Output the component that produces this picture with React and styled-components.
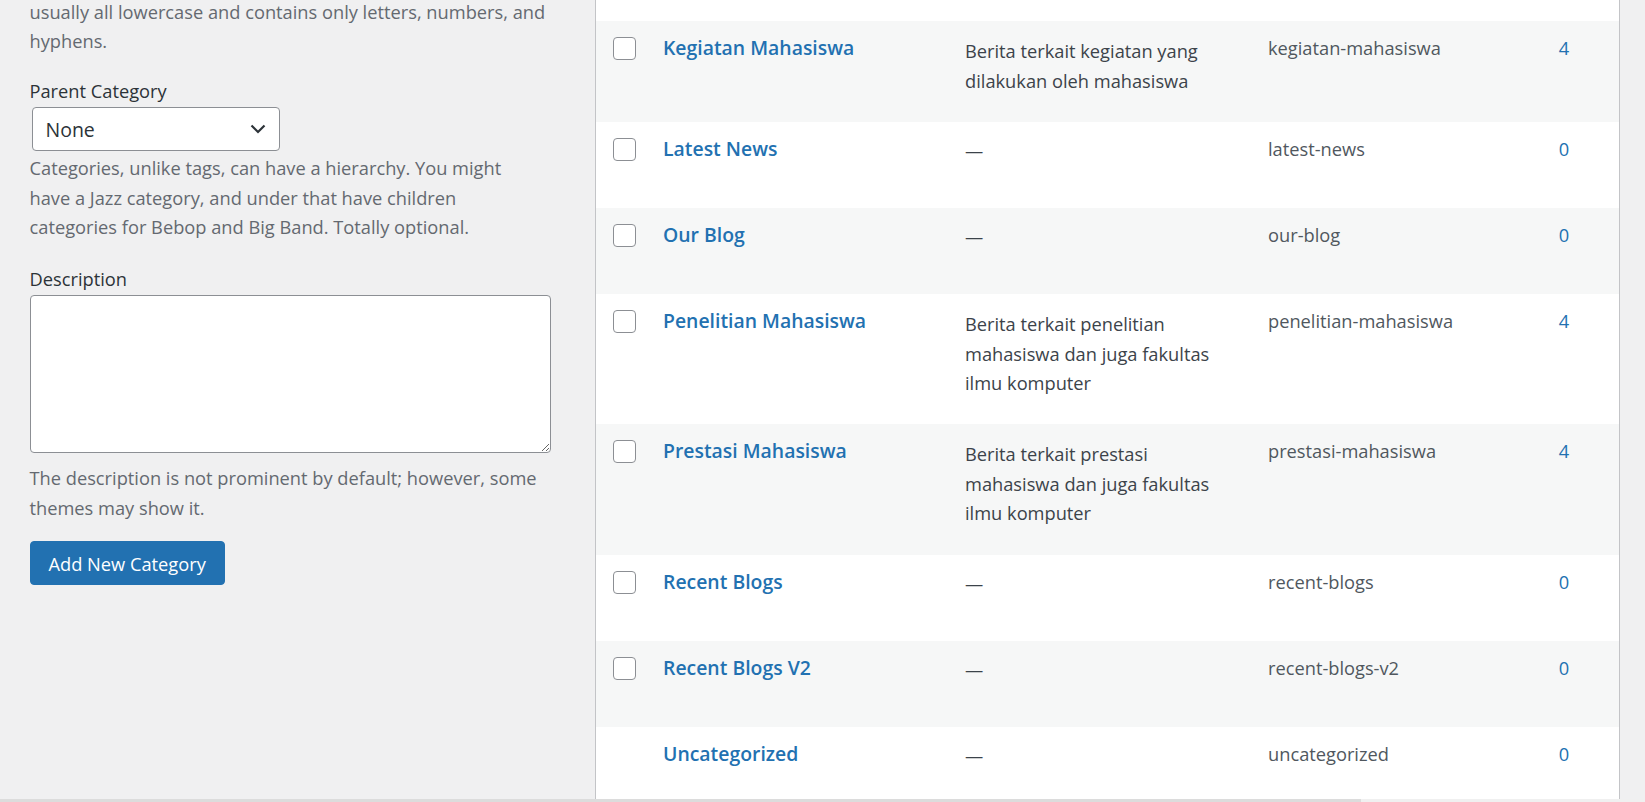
import React from 'react';
import styled, { createGlobalStyle } from 'styled-components';

const GlobalStyle = createGlobalStyle`
  html, body {
    margin: 0;
    padding: 0;
    height: 802px;
    overflow: hidden;
    background: #f0f0f1;
  }
  body {
    font-family: "Segoe UI", "Open Sans", "Noto Sans", sans-serif;
    font-size: 18.25px;
    color: #3c434a;
  }
  * {
    box-sizing: border-box;
  }
`;

const Screen = styled.div`
  display: grid;
  grid-template-rows: 799px 3px;
  height: 802px;
`;

const Main = styled.div`
  display: grid;
  grid-template-columns: 595px 1025px 1fr;
  overflow: hidden;
`;

const FormColumn = styled.div`
  display: flex;
  flex-direction: column;
  align-items: flex-start;
  padding-left: 29.5px;
`;

const Note = styled.p`
  margin: ${props => props.$top}px 0 0;
  line-height: 29.5px;
  color: #646970;
  white-space: nowrap;
`;

const FieldLabel = styled.label`
  display: block;
  margin-top: ${props => props.$top}px;
  line-height: 29.5px;
  color: #2c3338;
`;

const SelectBox = styled.div`
  display: flex;
  align-items: center;
  justify-content: space-between;
  width: 248px;
  height: 44px;
  margin: 1.5px 0 0 2px;
  padding: 0 13px 0 13px;
  background: #fff;
  border: 1px solid #8c8f94;
  border-radius: 4px;
  font-size: 19.5px;
  color: #2c3338;
`;

const TextArea = styled.textarea`
  display: block;
  width: 521px;
  height: 158px;
  margin-top: 1.5px;
  background: #fff;
  border: 1px solid #8c8f94;
  border-radius: 4px;
  font-family: inherit;
  font-size: 18.25px;
  resize: vertical;
`;

const PrimaryButton = styled.button`
  height: 44px;
  margin-top: 19px;
  padding: 0 18px;
  background: #2271b1;
  border: 1px solid #2271b1;
  border-radius: 4px;
  color: #fff;
  font-family: inherit;
  font-size: 18.25px;
  cursor: pointer;
`;

const TableWrap = styled.div`
  background: #fff;
  border-left: 1px solid #c3c4c7;
  border-right: 1px solid #c3c4c7;
`;

const RowTail = styled.div`
  height: 21px;
`;

const Row = styled.div`
  display: grid;
  grid-template-columns: 53px 302px 303px 263px 1fr;
  background: ${props => (props.$striped ? '#f6f7f7' : '#fff')};
`;

const CheckCell = styled.div`
  padding: 16px 0 0 17px;
`;

const CheckBox = styled.span`
  display: block;
  width: 23px;
  height: 23px;
  background: #fff;
  border: 1px solid #8c8f94;
  border-radius: 4px;
`;

const Cell = styled.div`
  padding: 12px 14px 11px;
  text-align: ${props => props.$align || 'left'};
  padding-right: ${props => (props.$align === 'center' ? 22 : 14)}px;
`;

const RowTitle = styled.a`
  display: block;
  line-height: 30px;
  font-size: 19.4px;
  font-weight: 600;
  color: #2271b1;
  text-decoration: none;
`;

const RowActions = styled.div`
  height: 33.4px;
  visibility: hidden;
`;

const Description = styled.p`
  margin: 3px 0 15.6px;
  line-height: 29.5px;
  color: #3c434a;
  white-space: nowrap;
`;

const Dash = styled.span`
  display: block;
  line-height: 33px;
  color: #3c434a;
`;

const Slug = styled.span`
  display: block;
  line-height: 30px;
  color: #50575e;
`;

const CountLink = styled.a`
  display: block;
  line-height: 30px;
  color: #2271b1;
  text-decoration: none;
`;

const ScrollTrack = styled.div`
  display: flex;
  background: #f0f0f0;
`;

const ScrollThumb = styled.div`
  width: 1361px;
  background: #dcdcdc;
`;

const categories = [
  { name: 'Kegiatan Mahasiswa', desc: ['Berita terkait kegiatan yang', 'dilakukan oleh mahasiswa'], slug: 'kegiatan-mahasiswa', count: 4 },
  { name: 'Latest News', slug: 'latest-news', count: 0 },
  { name: 'Our Blog', slug: 'our-blog', count: 0 },
  { name: 'Penelitian Mahasiswa', desc: ['Berita terkait penelitian', 'mahasiswa dan juga fakultas', 'ilmu komputer'], slug: 'penelitian-mahasiswa', count: 4 },
  { name: 'Prestasi Mahasiswa', desc: ['Berita terkait prestasi', 'mahasiswa dan juga fakultas', 'ilmu komputer'], slug: 'prestasi-mahasiswa', count: 4 },
  { name: 'Recent Blogs', slug: 'recent-blogs', count: 0 },
  { name: 'Recent Blogs V2', slug: 'recent-blogs-v2', count: 0 },
  { name: 'Uncategorized', slug: 'uncategorized', count: 0, locked: true },
];

function Chevron() {
  return (
    <svg width="16" height="10" viewBox="0 0 16 10" fill="none">
      <path d="M1.5 1.5 L8 8 L14.5 1.5" stroke="#2c3338" strokeWidth="2.2" />
    </svg>
  );
}

function withBreaks(lines) {
  return lines.map((line, i) => (
    <React.Fragment key={i}>
      {i > 0 && <br />}
      {line}
    </React.Fragment>
  ));
}

function CategoryRow({ cat, striped }) {
  return (
    <Row $striped={striped}>
      <CheckCell>{!cat.locked && <CheckBox />}</CheckCell>
      <Cell>
        <RowTitle href="#">{cat.name}</RowTitle>
        <RowActions>Edit | Quick Edit | Delete | View</RowActions>
      </Cell>
      <Cell>
        {cat.desc ? <Description>{withBreaks(cat.desc)}</Description> : <Dash>—</Dash>}
      </Cell>
      <Cell>
        <Slug>{cat.slug}</Slug>
      </Cell>
      <Cell $align="center">
        <CountLink href="#">{cat.count}</CountLink>
      </Cell>
    </Row>
  );
}

export default function App() {
  return (
    <>
      <GlobalStyle />
      <Screen>
        <Main>
          <FormColumn>
            <Note $top={-3.5}>
              {withBreaks(['usually all lowercase and contains only letters, numbers, and', 'hyphens.'])}
            </Note>
            <FieldLabel $top={20.5}>Parent Category</FieldLabel>
            <SelectBox>
              <span>None</span>
              <Chevron />
            </SelectBox>
            <Note $top={2}>
              {withBreaks([
                'Categories, unlike tags, can have a hierarchy. You might',
                'have a Jazz category, and under that have children',
                'categories for Bebop and Big Band. Totally optional.',
              ])}
            </Note>
            <FieldLabel $top={22.5}>Description</FieldLabel>
            <TextArea />
            <Note $top={10}>
              {withBreaks(['The description is not prominent by default; however, some', 'themes may show it.'])}
            </Note>
            <PrimaryButton>Add New Category</PrimaryButton>
          </FormColumn>
          <TableWrap>
            <RowTail />
            {categories.map((cat, i) => (
              <CategoryRow key={cat.slug} cat={cat} striped={i % 2 === 0} />
            ))}
          </TableWrap>
          <div />
        </Main>
        <ScrollTrack>
          <ScrollThumb />
        </ScrollTrack>
      </Screen>
    </>
  );
}
